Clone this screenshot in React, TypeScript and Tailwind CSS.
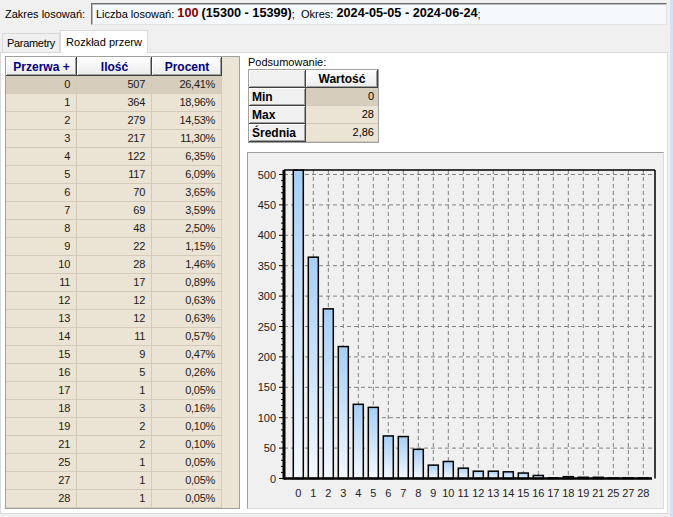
import React from 'react';

interface GapRow {
  gap: number;
  count: number;
  percent: string;
}

const gapRows: GapRow[] = [
  { gap: 0, count: 507, percent: '26,41%' },
  { gap: 1, count: 364, percent: '18,96%' },
  { gap: 2, count: 279, percent: '14,53%' },
  { gap: 3, count: 217, percent: '11,30%' },
  { gap: 4, count: 122, percent: '6,35%' },
  { gap: 5, count: 117, percent: '6,09%' },
  { gap: 6, count: 70, percent: '3,65%' },
  { gap: 7, count: 69, percent: '3,59%' },
  { gap: 8, count: 48, percent: '2,50%' },
  { gap: 9, count: 22, percent: '1,15%' },
  { gap: 10, count: 28, percent: '1,46%' },
  { gap: 11, count: 17, percent: '0,89%' },
  { gap: 12, count: 12, percent: '0,63%' },
  { gap: 13, count: 12, percent: '0,63%' },
  { gap: 14, count: 11, percent: '0,57%' },
  { gap: 15, count: 9, percent: '0,47%' },
  { gap: 16, count: 5, percent: '0,26%' },
  { gap: 17, count: 1, percent: '0,05%' },
  { gap: 18, count: 3, percent: '0,16%' },
  { gap: 19, count: 2, percent: '0,10%' },
  { gap: 21, count: 2, percent: '0,10%' },
  { gap: 25, count: 1, percent: '0,05%' },
  { gap: 27, count: 1, percent: '0,05%' },
  { gap: 28, count: 1, percent: '0,05%' }
];

const summary = [
  { label: 'Min', value: '0' },
  { label: 'Max', value: '28' },
  { label: 'Średnia', value: '2,86' }
];

const raised =
  'shadow-[inset_-1px_-1px_0_#404040,inset_1px_1px_0_#ffffff,inset_-2px_-2px_0_#a0a0a0]';

function Chart() {
  // plot coordinates inside the chart panel
  const left = 36;
  const right = 407;
  const top = 17;
  const zero = 325.5;
  const k = 304 / 500;
  const cx = (i: number) => 50.3 + i * 15;
  const yOf = (v: number) => zero - v * k;
  const majors = [50, 100, 150, 200, 250, 300, 350, 400, 450, 500];
  const minors: number[] = [];
  for (let v = 10; v <= 500; v += 10) if (v % 50 !== 0) minors.push(v);

  return (
    <svg width="415" height="355" className="block" fontFamily="'Liberation Sans', Arial, sans-serif" fontSize="11">
      <defs>
        <linearGradient id="bar" x1="0" y1="0" x2="0" y2="1">
          <stop offset="0%" stopColor="#a6cff6" />
          <stop offset="100%" stopColor="#f4f9ff" />
        </linearGradient>
      </defs>

      {/* grid */}
      {majors.map((v) => (
        <line key={'h' + v} x1={left} x2={right} y1={yOf(v)} y2={yOf(v)} stroke="#808080" strokeDasharray="4 3" />
      ))}
      {gapRows.map((_, i) => (
        <line key={'v' + i} x1={cx(i)} x2={cx(i)} y1={top} y2={zero} stroke="#808080" strokeDasharray="4 3" />
      ))}

      {/* bars */}
      {gapRows.map((r, i) => {
        const h = Math.max(r.count * k, 0.5);
        return (
          <rect
            key={'b' + i}
            x={cx(i) - 5}
            y={zero - h}
            width={10}
            height={h}
            fill="url(#bar)"
            stroke="#000"
            strokeWidth={1.5}
          />
        );
      })}

      {/* frame and axes */}
      <line x1={left} x2={right} y1={top} y2={top} stroke="#000" strokeWidth={1.5} />
      <line x1={right} x2={right} y1={top} y2={zero} stroke="#000" strokeWidth={1.5} />
      <line x1={left} x2={404} y1={zero} y2={zero} stroke="#000" strokeWidth={2.5} />
      <line x1={left} x2={left} y1={top} y2={zero + 1} stroke="#000" strokeWidth={3} />
      {[0, ...majors].map((v) => (
        <line key={'t' + v} x1={left - 5} x2={left} y1={yOf(v)} y2={yOf(v)} stroke="#000" />
      ))}
      {minors.map((v) => (
        <line key={'m' + v} x1={left - 3} x2={left} y1={yOf(v)} y2={yOf(v)} stroke="#000" />
      ))}

      {/* labels */}
      {[0, ...majors].map((v) => (
        <text key={'y' + v} x={28} y={yOf(v) + 4} textAnchor="end" fill="#222">
          {v}
        </text>
      ))}
      {gapRows.map((r, i) => (
        <text key={'x' + i} x={cx(i)} y={344} textAnchor="middle" fill="#222">
          {r.gap}
        </text>
      ))}
    </svg>
  );
}

export default function App() {
  return (
    <div className="w-[673px] h-[517px] bg-[#f0f0f0] flex overflow-hidden font-['Liberation_Sans',Arial,sans-serif] text-[11px] text-black">
      <div className="w-[670px] flex flex-col">
        {/* Range bar */}
        <div className="h-[28px] flex items-center pl-[5px] pr-[3px]">
          <span className="w-[86px] shrink-0">Zakres losowań:</span>
          <div className="flex-1 h-[22px] flex items-center pl-[4px] bg-[#f5f8fd] border border-[#e3e3e3] border-t-[#6f6f6f] border-l-[#6f6f6f] shadow-[inset_1px_1px_0_#b9b9b9] whitespace-pre">
            <span>Liczba losowań: </span>
            <b className="text-[12.7px] text-[#800000]">100</b>
            <span> </span>
            <b className="text-[12.7px]">(15300 - 15399)</b>
            <span>;  Okres: </span>
            <b className="text-[12.7px]">2024-05-05 - 2024-06-24</b>
            <span>;</span>
          </div>
        </div>

        {/* Tabs */}
        <div className="h-[24px] flex items-end pl-[2px] relative z-10">
          <div className="h-[19px] w-[58px] flex items-center justify-center border border-b-0 border-[#d9d9d9] bg-[#f0f0f0] tracking-[-0.3px]">
            Parametry
          </div>
          <div className="h-[23px] w-[88px] -mb-px flex items-center justify-center border border-b-0 border-[#d9d9d9] bg-white">
            Rozkład przerw
          </div>
        </div>

        {/* Tab page */}
        <div className="h-[462px] w-[668px] bg-white border border-[#d9d9d9] pt-[3px] pl-[4px] flex gap-[7px]">
          {/* Gap table */}
          <div className="w-[235px] h-[453px] border border-[#a0a0a0] bg-[#ebe3d3] flex flex-col">
            <div className="grid grid-cols-[71px_75px_70px_1fr] h-[19px] shrink-0">
              {['Przerwa +', 'Ilość', 'Procent'].map((h) => (
                <div
                  key={h}
                  className={`flex items-center justify-center font-bold text-[12px] text-[#000080] bg-linear-to-b from-white to-[#ebebeb] ${raised}`}
                >
                  {h}
                </div>
              ))}
              <div />
            </div>
            {gapRows.map((r, i) => (
              <div
                key={r.gap}
                className={`grid grid-cols-[71px_75px_70px_1fr] h-[18px] shrink-0 tracking-[-0.3px] text-[#1a1a1a] ${i === 0 ? 'bg-[#d6cdbc]' : ''}`}
              >
                <div className="flex items-center justify-end pr-[6px] border-r border-b border-[#d3cab9]">{r.gap}</div>
                <div className="flex items-center justify-end pr-[6px] border-r border-b border-[#d3cab9]">{r.count}</div>
                <div className="flex items-center justify-end pr-[6px] border-r border-b border-[#d3cab9]">{r.percent}</div>
                <div className="bg-[#ebe3d3]" />
              </div>
            ))}
          </div>

          {/* Summary and chart */}
          <div className="w-[417px] h-[453px] flex flex-col">
            <div className="h-[13px] leading-[13px] pl-[1px]">Podsumowanie:</div>
            <div className="w-[131px] h-[74px] ml-[1px] border border-[#a0a0a0] bg-[#ebe3d3] flex flex-col">
              <div className="grid grid-cols-[57px_72px] h-[18px]">
                <div className={`bg-[#f0f0f0] ${raised}`} />
                <div className={`flex items-center justify-center font-bold text-[12px] bg-linear-to-b from-white to-[#ebebeb] ${raised}`}>
                  Wartość
                </div>
              </div>
              {summary.map((s, i) => (
                <div key={s.label} className="grid grid-cols-[57px_72px] h-[18px]">
                  <div className={`flex items-center pl-[3px] font-bold text-[12px] bg-[#f0f0f0] ${raised}`}>{s.label}</div>
                  <div
                    className={`flex items-center justify-end pr-[4px] border-b border-[#d3cab9] ${i === 0 ? 'bg-[#d6cdbc]' : 'bg-[#ebe3d3]'}`}
                  >
                    {s.value}
                  </div>
                </div>
              ))}
            </div>
            <div className="mt-[9px] w-[417px] h-[357px] bg-[#f0f0f0] border border-[#dcdcdc] border-t-[#a0a0a0] border-l-[#a0a0a0]">
              <Chart />
            </div>
          </div>
        </div>
      </div>
      <div className="w-[3px] bg-[#d4e3f4]" />
    </div>
  );
}
